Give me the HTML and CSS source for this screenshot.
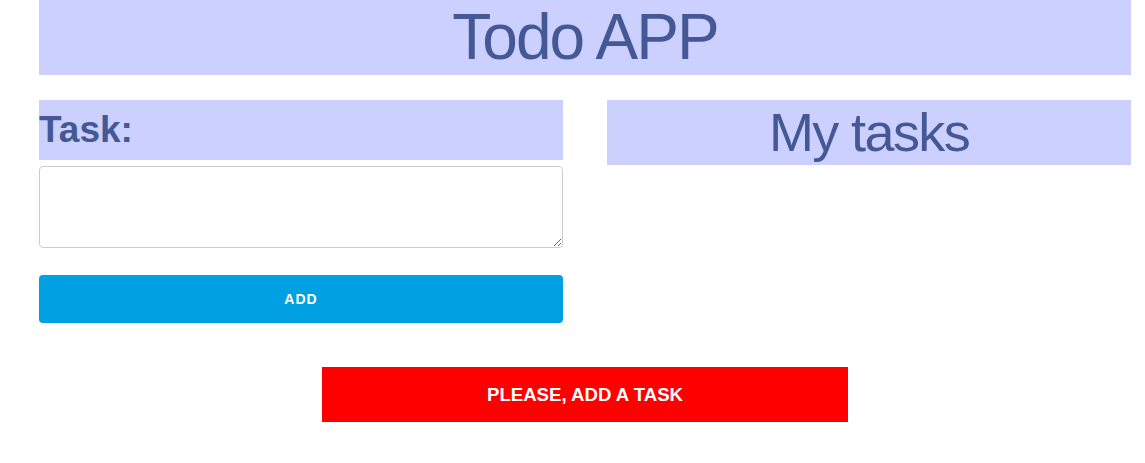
FILE: index.html
```html
<!DOCTYPE html>
<html lang="en">
<head>
<meta charset="utf-8">
<title>Todo APP</title>
<link rel="stylesheet" href="styles.css">
</head>
<body>
<div class="app">
  <header class="app-header">
    <h1 class="app-title">Todo APP</h1>
  </header>
  <main class="columns">
    <section class="col form-col">
      <label class="task-label" for="task">Task:</label>
      <textarea id="task" class="task-input"></textarea>
      <button class="add-btn" type="button">ADD</button>
    </section>
    <section class="col list-col">
      <h2 class="list-title">My tasks</h2>
    </section>
  </main>
  <div class="notice">PLEASE, ADD A TASK</div>
</div>
</body>
</html>
```
FILE: styles.css
```css
html, body {
  margin: 0;
  padding: 0;
  background: #ffffff;
}
body {
  font-family: "Liberation Sans", Arial, sans-serif;
}
.app {
  width: 1092px;
  margin-left: 39px;
  display: flex;
  flex-direction: column;
  align-items: center;
}
.app-header {
  width: 100%;
  height: 75px;
  background: #cbd0ff;
}
.app-title {
  margin: 0;
  font-size: 64px;
  font-weight: normal;
  line-height: 75px;
  letter-spacing: -0.03em;
  color: #455896;
  text-align: center;
}
.columns {
  width: 100%;
  display: flex;
  justify-content: space-between;
  margin-top: 25px;
}
.col {
  width: 524px;
  display: flex;
  flex-direction: column;
}
.task-label {
  display: block;
  height: 60px;
  line-height: 60px;
  font-size: 37px;
  font-weight: bold;
  color: #455896;
  background: #cbd0ff;
}
.task-input {
  box-sizing: border-box;
  width: 100%;
  height: 82px;
  margin: 6px 0 0 0;
  border: 1px solid #cccccc;
  border-radius: 4px;
  padding: 6px;
  font-family: "Liberation Sans", Arial, sans-serif;
  font-size: 14px;
  display: block;
}
.add-btn {
  margin-top: 27px;
  height: 48px;
  width: 100%;
  border: none;
  border-radius: 4px;
  background: #00a0e2;
  color: #ffffff;
  font-family: "Liberation Sans", Arial, sans-serif;
  font-size: 14px;
  font-weight: bold;
  letter-spacing: 1px;
  padding: 0;
}
.list-title {
  margin: 0;
  height: 65px;
  line-height: 65px;
  font-size: 54px;
  font-weight: normal;
  letter-spacing: -0.03em;
  color: #455896;
  background: #cbd0ff;
  text-align: center;
}
.notice {
  margin-top: 44px;
  width: 526px;
  height: 55px;
  line-height: 55px;
  background: #ff0000;
  color: #ffffff;
  font-size: 18.6px;
  font-weight: bold;
  text-align: center;
}
```
